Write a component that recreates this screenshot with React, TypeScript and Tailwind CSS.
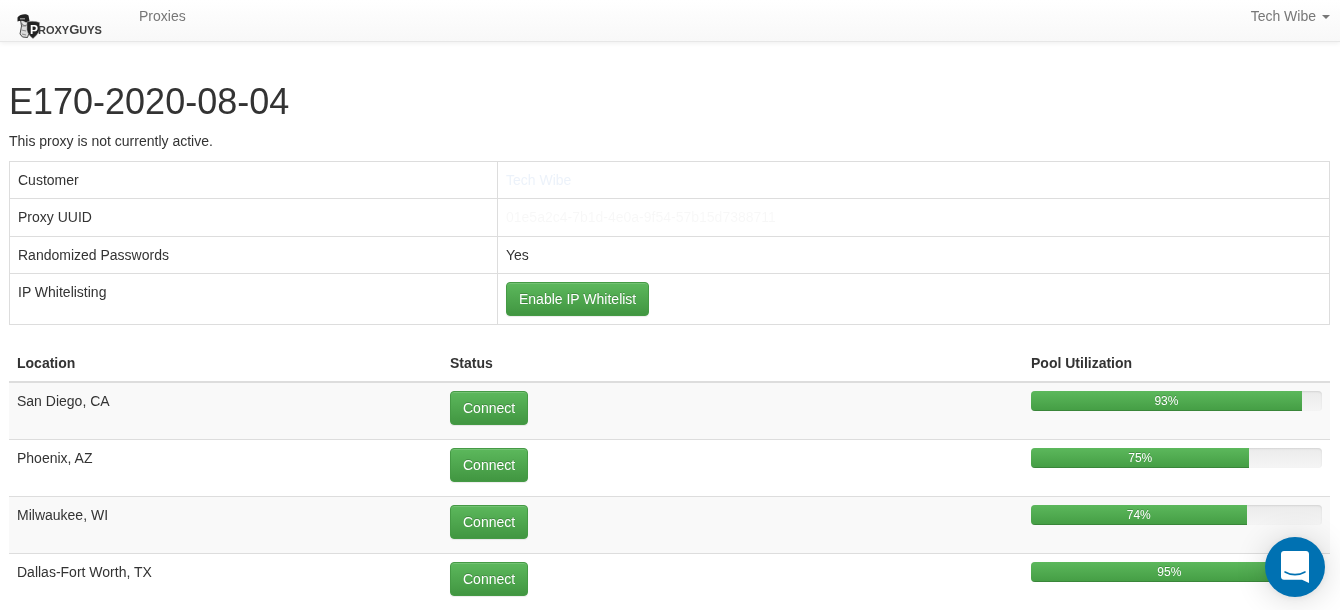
const locations = [
  { name: "San Diego, CA", pool: 93 },
  { name: "Phoenix, AZ", pool: 75 },
  { name: "Milwaukee, WI", pool: 74 },
  { name: "Dallas-Fort Worth, TX", pool: 95 },
];

const btn =
  "inline-block rounded-[4px] border border-[#459a45] bg-gradient-to-b from-[#5cb85c] to-[#419641] px-3 py-1.5 text-sm leading-5 text-white [text-shadow:0_-1px_0_rgba(0,0,0,0.2)] shadow-[inset_0_1px_0_rgba(255,255,255,0.15),0_1px_1px_rgba(0,0,0,0.075)]";

function Logo() {
  return (
    <div className="relative flex h-[26px] w-[90px] items-center blur-[0.3px]">
      <svg viewBox="0 0 24 26" className="absolute left-0 top-0 h-[26px] w-[24px]">
        <path d="M3.5 6 L11 6 L12 19 L10.5 23.5 L5.5 23 L3 20 L4.5 12 Z" fill="#dcdcdc" stroke="#4a4a4a" strokeWidth="1" />
        <path d="M5 12 L9 12 M4.5 16 L9 17 M5 20 L9 21" stroke="#777" strokeWidth="0.8" />
        <path d="M4.5 9 C6 12 9 12 11 10" fill="#f4f4f4" stroke="#555" strokeWidth="0.9" />
        <path d="M0.5 3.5 C3 0.2 9 -0.6 11.5 1.5 L12.5 7 L9 8.5 C7 6.6 3 6.2 0.5 7.5 Z" fill="#222" />
        <rect x="3" y="4" width="5" height="1.5" fill="#8a8a8a" />
        <path d="M10 8 C13 7 18 7 22.5 8.5 L22.5 16 C21.5 19.5 18.5 22.5 16 24.5 C13 22.5 10.8 19.5 10 16 Z" fill="#222" stroke="#999" strokeWidth="0.5" />
      </svg>
      <span className="relative ml-[13px] mt-[5px] flex items-baseline font-bold leading-none text-[#3f3f3f]">
        <span className="text-[12px] text-white">P</span>
        <span className="text-[11px]">ROXY</span>
        <span className="text-[13px]">G</span>
        <span className="text-[11px]">UYS</span>
      </span>
    </div>
  );
}

export default function App() {
  return (
    <div className="relative h-[610px] overflow-hidden bg-white font-['Liberation_Sans',Arial,sans-serif] text-sm leading-5 text-[#333] opacity-[0.999]">
      <nav className="flex h-[42px] items-start border-b border-[#e7e7e7] bg-gradient-to-b from-white to-[#f8f8f8] shadow-[0_1px_5px_rgba(0,0,0,0.075)]">
        <div className="ml-[17px] mt-[14px]">
          <Logo />
        </div>
        <a className="ml-[32px] mt-[6px] text-[#777]">Proxies</a>
        <a className="ml-auto mr-[10px] mt-[6px] flex items-center text-[#777]">
          Tech Wibe
          <span className="ml-[6px] mt-[2px] h-0 w-0 border-x-4 border-t-4 border-x-transparent border-t-[#777]" />
        </a>
      </nav>

      <main className="px-[9px] pr-[10px] pt-[40px]">
        <h1 className="text-4xl leading-[39.6px] font-medium">E170-2020-08-04</h1>
        <p className="mt-[9px] mb-[10px]">This proxy is not currently active.</p>

        <table className="w-full table-fixed border-collapse">
          <tbody>
            <tr className="h-[37px]">
              <td className="w-[488px] border border-[#ddd] px-2 align-middle">Customer</td>
              <td className="border border-[#ddd] px-2 align-middle">
                <span className="text-[rgba(130,170,220,0.15)] blur-[0.4px]">Tech Wibe</span>
              </td>
            </tr>
            <tr className="h-[38px]">
              <td className="border border-[#ddd] px-2 align-middle">Proxy UUID</td>
              <td className="border border-[#ddd] px-2 align-middle">
                <span className="text-black/[0.03] blur-[0.4px]">01e5a2c4-7b1d-4e0a-9f54-57b15d7388711</span>
              </td>
            </tr>
            <tr className="h-[37px]">
              <td className="border border-[#ddd] px-2 align-middle">Randomized Passwords</td>
              <td className="border border-[#ddd] px-2 align-middle">Yes</td>
            </tr>
            <tr>
              <td className="border border-[#ddd] p-2 align-top">IP Whitelisting</td>
              <td className="border border-[#ddd] p-2 align-top">
                <button className={btn}>Enable IP Whitelist</button>
              </td>
            </tr>
          </tbody>
        </table>

        <table className="mt-5 w-full table-fixed border-collapse">
          <thead>
            <tr className="border-b-2 border-[#ddd]">
              <th className="w-[433px] p-2 text-left font-bold">Location</th>
              <th className="w-[581px] p-2 text-left font-bold">Status</th>
              <th className="p-2 text-left font-bold">Pool Utilization</th>
            </tr>
          </thead>
          <tbody>
            {locations.map((loc, i) => (
              <tr key={loc.name} className={`border-t border-[#ddd] ${i % 2 === 0 ? "bg-[#f9f9f9]" : ""}`}>
                <td className="p-2 align-top">{loc.name}</td>
                <td className="p-2 align-top">
                  <button className={btn}>Connect</button>
                </td>
                <td className="p-2 align-top">
                  <div className="mb-5 mr-[-0.3px] h-5 overflow-hidden rounded-[4px] bg-gradient-to-b from-[#ebebeb] to-[#f5f5f5] shadow-[inset_0_1px_2px_rgba(0,0,0,0.1)]">
                    <div
                      className="h-full bg-gradient-to-b from-[#5cb85c] to-[#449d44] text-center text-xs leading-5 text-white [text-shadow:0_-1px_0_rgba(0,0,0,0.2)] shadow-[inset_0_-1px_0_rgba(0,0,0,0.15)]"
                      style={{ width: `${loc.pool}%` }}
                    >
                      {loc.pool}%
                    </div>
                  </div>
                </td>
              </tr>
            ))}
          </tbody>
        </table>
      </main>

      <div className="absolute left-[1265px] top-[537px] flex h-[60px] w-[60px] items-center justify-center rounded-full bg-[#0071b2] shadow-[0_1px_6px_rgba(0,0,0,0.06),0_2px_32px_rgba(0,0,0,0.16)]">
        <svg viewBox="0 0 28 32" className="h-8 w-7">
          <path d="M3 0 H25 C26.7 0 28 1.3 28 3 V32 L21 28.8 H3 C1.3 28.8 0 27.5 0 25.8 V3 C0 1.3 1.3 0 3 0 Z" fill="#fff" />
          <path d="M4 21 C10 24.5 18 24.5 24 21" fill="none" stroke="#0071b2" strokeWidth="1.6" strokeLinecap="round" />
        </svg>
      </div>
    </div>
  );
}
